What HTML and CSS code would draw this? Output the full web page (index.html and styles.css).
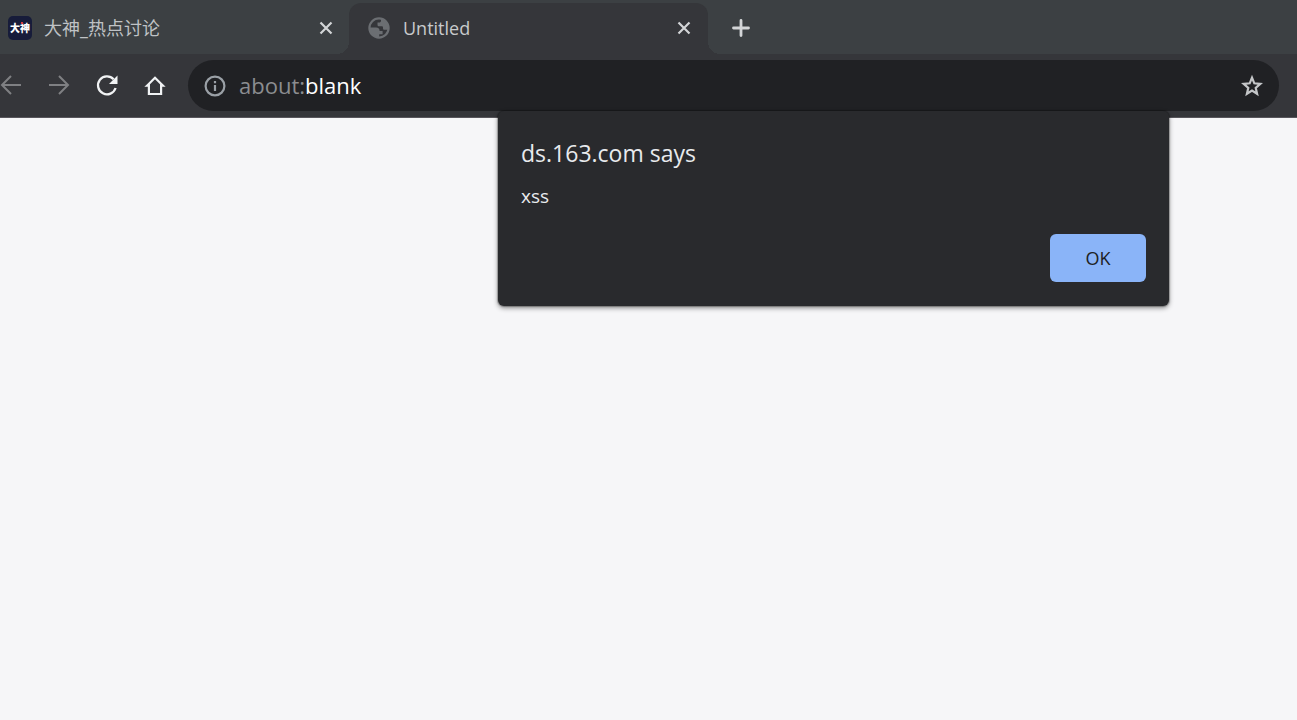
FILE: index.html
```html
<!DOCTYPE html>
<html lang="en">
<head>
<meta charset="utf-8">
<title>Untitled</title>
<link rel="stylesheet" href="styles.css">
</head>
<body>
<header class="browser">
  <div class="tabs" role="tablist">
    <div class="tab" role="tab" aria-selected="false">
      <span class="site-icon" lang="zh">大神</span>
      <span class="tab-title" lang="zh">大神_热点讨论</span>
      <button class="icon-button close" aria-label="Close tab"><svg width="14" height="14" viewBox="0 0 14 14"><path d="M1.5 1.5l11 11M12.5 1.5l-11 11" stroke="currentColor" stroke-width="2.2"/></svg></button>
    </div>
    <div class="tab active" role="tab" aria-selected="true">
      <svg class="globe" width="24" height="24" viewBox="0 0 24 24"><circle cx="12" cy="12" r="9.600" fill="none" stroke="currentColor" stroke-width="2.200"/><path fill="currentColor" d="M2.500 11.500h6.500c2.600 0 3.600 1.400 3.600 3.600h3v3.100h-3.400v3.500C6 21.500 2.500 17 2.500 11.500zM14 2.500v2.300c0 1-.8 1.800-1.800 1.800h-1.700v2.200c0 1 .8 1.500 1.500 1.500h2.700c.8 0 1.300.5 1.300 1.300v.9c0 .8.600 1.300 1.300 1.300h4C22.500 9 19.500 3.500 14 2.500z"/></svg>
      <span class="tab-title">Untitled</span>
      <button class="icon-button close" aria-label="Close tab"><svg width="14" height="14" viewBox="0 0 14 14"><path d="M1.500 1.500l11 11M12.500 1.500l-11 11" stroke="currentColor" stroke-width="2.200"/></svg></button>
    </div>
    <button class="icon-button new-tab" aria-label="New tab"><svg width="18" height="18" viewBox="0 0 18 18"><path d="M9 1.500v15M1.500 9h15" stroke="currentColor" stroke-width="2.800" stroke-linecap="round"/></svg></button>
  </div>
  <div class="toolbar">
    <nav class="navigation">
      <button class="icon-button muted" aria-label="Back"><svg width="24" height="24" viewBox="0 0 24 24"><path d="M22 11H4M12 2l-9 9 9 9" fill="none" stroke="currentColor" stroke-width="2"/></svg></button>
      <button class="icon-button muted" aria-label="Forward"><svg width="24" height="24" viewBox="0 0 24 24"><path d="M2 11h18M12 2l9 9-9 9" fill="none" stroke="currentColor" stroke-width="2"/></svg></button>
      <button class="icon-button" aria-label="Reload"><svg width="24" height="24" viewBox="0 0 24 24"><path d="M20.600 14A9 9 0 1 1 18.600 5.200" fill="none" stroke="currentColor" stroke-width="2.300"/><path d="M22.500 1.500v8.500H14z" fill="currentColor"/></svg></button>
      <button class="icon-button" aria-label="Home"><svg width="24" height="24" viewBox="0 0 24 24"><path d="M4 11.700L12 3.700l8 8h-1.900V20H5.900v-8.300z" fill="none" stroke="currentColor" stroke-width="2.200"/></svg></button>
    </nav>
    <div class="address">
      <svg class="info" width="22" height="22" viewBox="0 0 22 22"><circle cx="11" cy="11" r="9.400" fill="none" stroke="currentColor" stroke-width="2.200"/><path d="M11 10v6M11 6v2.200" stroke="currentColor" stroke-width="2.200"/></svg>
      <label class="scheme" for="url">about:</label><input class="url" id="url" type="text" value="blank" spellcheck="false">
      <button class="icon-button star" aria-label="Bookmark this tab"><svg width="24" height="24" viewBox="0 0 24 24"><path d="M12 3.600l2.300 5.700 6 .5-4.600 4 1.400 6-5.100-3.200-5.100 3.200 1.400-6-4.600-4 6-.5z" fill="none" stroke="currentColor" stroke-width="2.200"/></svg></button>
    </div>
  </div>
</header>
<main class="page"></main>
<section class="dialog" role="alertdialog" aria-labelledby="dialog-title" aria-describedby="dialog-message">
  <h1 class="dialog-title" id="dialog-title">ds.163.com says</h1>
  <p class="dialog-message" id="dialog-message">xss</p>
  <div class="dialog-actions"><button class="ok">OK</button></div>
</section>
</body>
</html>
```

FILE: styles.css
```css
* { box-sizing: border-box; }

body {
  margin: 0;
  min-height: 100vh;
  display: flex;
  flex-direction: column;
  background: #f6f6f8;
  font-family: "Open Sans", "Noto Sans CJK SC", sans-serif;
}

button { font: inherit; border: 0; padding: 0; background: none; }
svg { display: block; flex: none; }

.icon-button { display: flex; color: #f1f3f4; flex: none; }
.icon-button.muted { color: #7f8083; }

.tabs {
  display: flex;
  height: 54px;
  padding-top: 3px;
  background: #3c4043;
}

.tab {
  position: relative;
  display: flex;
  align-items: center;
  width: 349px;
  padding: 0 16px 1px 8px;
  color: #bfc2c5;
  font-size: 18px;
}

.tab.active {
  width: 359px;
  padding: 0 17px 1px 18px;
  border-radius: 12px 12px 0 0;
  background: #35363a;
  color: #c8cacc;
}

.tab.active::before,
.tab.active::after {
  content: "";
  position: absolute;
  bottom: 0;
  width: 12px;
  height: 12px;
}

.tab.active::before {
  right: 100%;
  background: radial-gradient(circle at 0 0, transparent 12px, #35363a 12px);
}

.tab.active::after {
  left: 100%;
  background: radial-gradient(circle at 100% 0, transparent 12px, #35363a 12px);
}

.site-icon {
  position: relative;
  width: 24px;
  height: 24px;
  border-radius: 5px;
  background: #171c3a;
  color: #fff;
  font-size: 10px;
  font-weight: 900;
  line-height: 24px;
  text-align: center;
}

.site-icon::after {
  content: "";
  position: absolute;
  top: 6px;
  right: 9px;
  width: 2px;
  height: 2px;
  background: #d8393f;
}

.tab-title { flex: 1; margin-left: 12px; line-height: 24px; white-space: nowrap; }
.close, .new-tab { color: #d3d5d7; }
.globe { color: #6b6e72; }
.new-tab { align-self: center; margin-left: 24px; padding-bottom: 1px; }

.toolbar {
  display: flex;
  align-items: center;
  gap: 21px;
  height: 64px;
  padding-right: 18px;
  border-bottom: 1px solid #58565c;
  background: #35363a;
}

.navigation { display: flex; gap: 24px; margin-left: -1px; }

.address {
  display: flex;
  flex: 1;
  align-items: center;
  height: 51px;
  padding: 0 15px 0 16px;
  border-radius: 26px;
  background: #202124;
  font-size: 22px;
}

.info { color: #9aa0a6; }
.scheme { margin-left: 13px; padding-bottom: 2px; color: #8b8d90; line-height: 32px; }

.url {
  flex: 1;
  min-width: 0;
  height: 34px;
  padding: 0 0 2px;
  border: 0;
  background: none;
  color: #fff;
  font: inherit;
}

.star { color: #c4c6c8; }
.page { flex: 1; }

.dialog {
  position: absolute;
  top: 111px;
  right: 128px;
  width: 671px;
  padding: 26px 23px 24px;
  border-radius: 6px;
  background: #292a2d;
  box-shadow: 0 2px 5px rgba(0, 0, 0, .45), 0 0 1px 1px rgba(0, 0, 0, .25);
  color: #e8eaed;
}

.dialog-title { margin: 0; font-size: 23px; font-weight: 400; line-height: 32px; }
.dialog-message { margin: 14px 0 0; font-size: 19px; line-height: 26px; }
.dialog-actions { display: flex; justify-content: flex-end; margin-top: 25px; }

.ok {
  width: 96px;
  height: 48px;
  border-radius: 6px;
  background: #8ab4f8;
  color: #202124;
  font-size: 18px;
}
```
